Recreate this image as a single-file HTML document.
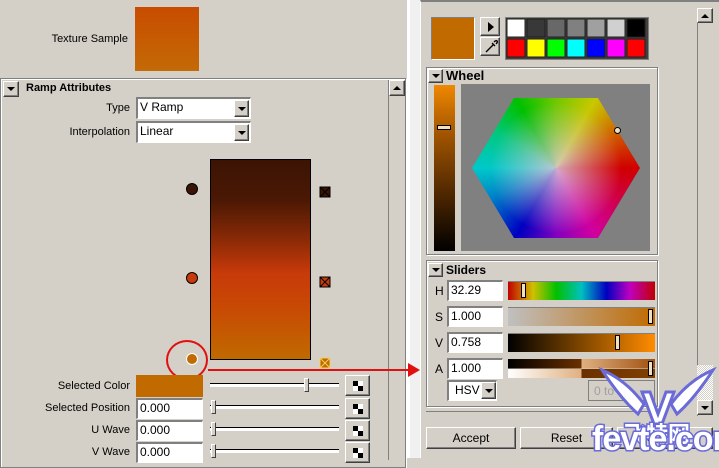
<!DOCTYPE html><html><head><meta charset="utf-8"><style>
*{margin:0;padding:0;box-sizing:border-box}
body{width:719px;height:458px;overflow:hidden;background:#d4d0c8;font-family:"Liberation Sans",Arial,sans-serif;font-size:11px;color:#000;position:relative}
.a{position:absolute}
.lbl{position:absolute;text-align:right;white-space:nowrap}
.in{position:absolute;background:#fff;border-top:2px solid #808080;border-left:2px solid #808080;border-right:1px solid #fff;border-bottom:1px solid #fff;padding-left:2px;line-height:17px;white-space:nowrap;font-size:12px}
.btn{position:absolute;background:#d4d0c8;border-top:1px solid #fff;border-left:1px solid #fff;border-right:1px solid #404040;border-bottom:1px solid #404040;box-shadow:inset -1px -1px 0 #808080}
.arr{position:absolute;width:0;height:0;border-left:4px solid transparent;border-right:4px solid transparent;border-top:4px solid #000}
.frame{position:absolute;border:1px solid #808080;box-shadow:1px 1px 0 #fff inset,1px 1px 0 #fff}
.chk{position:absolute;width:10px;height:10px;background:linear-gradient(90deg,#000 50%,#fff 50%) top/100% 50% no-repeat,linear-gradient(90deg,#fff 50%,#000 50%) bottom/100% 50% no-repeat}
.sl{position:absolute;height:4px;border-top:1px solid #000;border-bottom:1px solid #fff;background:#fff}
.th{position:absolute;width:5px;height:14px;background:#d4d0c8;border:1px solid #404040;border-top-color:#fff;border-left-color:#fff}
.b{font-weight:bold}
</style></head><body>
<div class="lbl" style="left:40px;top:33px;width:88px">Texture Sample</div>
<div class="a" style="left:135px;top:7px;width:64px;height:64px;background:linear-gradient(#c84c00,#c46a06)"></div>
<div class="a" style="left:407px;top:0;width:3px;height:458px;background:#fff"></div>
<div class="a" style="left:410px;top:0;width:10px;height:458px;background:#f0f0f0"></div>
<div class="frame" style="left:0;top:78px;width:406px;height:390px"></div>
<div class="btn" style="left:3px;top:81px;width:16px;height:16px"><div class="arr" style="left:3px;top:5px"></div></div>
<div class="a b" style="left:26px;top:82px">Ramp Attributes</div>
<div class="a" style="left:388px;top:80px;width:17px;height:380px;background:#d4d0c8;border-left:1px solid #808080"></div>
<div class="btn" style="left:389px;top:80px;width:16px;height:16px"><div class="arr" style="left:3px;top:5px;border-top:0;border-bottom:4px solid #000"></div></div>
<div class="lbl" style="left:60px;top:102px;width:70px">Type</div>
<div class="in" style="left:136px;top:97px;width:115px;height:22px">V Ramp</div>
<div class="btn" style="left:234px;top:100px;width:15px;height:17px"><div class="arr" style="left:3px;top:6px"></div></div>
<div class="lbl" style="left:40px;top:126px;width:90px">Interpolation</div>
<div class="in" style="left:136px;top:121px;width:115px;height:22px">Linear</div>
<div class="btn" style="left:234px;top:124px;width:15px;height:17px"><div class="arr" style="left:3px;top:6px"></div></div>
<div class="a" style="left:210px;top:159px;width:101px;height:201px;border:1px solid #000;background:linear-gradient(#3c1404 0%,#4a1804 20%,#8a2a06 40%,#c83a0a 57%,#c84a04 75%,#c06a00 100%)"></div>
<div class="a" style="left:186px;top:183px;width:12px;height:12px;border-radius:50%;background:#3c1404;border:1px solid #000"></div>
<div class="a" style="left:186px;top:272px;width:12px;height:12px;border-radius:50%;background:#c83a0a;border:1px solid #000"></div>
<div class="a" style="left:186px;top:353px;width:12px;height:12px;border-radius:50%;background:#c06a00;border:1px solid #fff"></div>
<div class="a" style="left:166px;top:340px;width:42px;height:40px;border-radius:50%;border:2px solid #e01010"></div>
<svg class="a" style="left:318px;top:186px" width="14" height="186">
<g stroke="#000" fill="#3c1404"><rect x="2" y="1" width="10" height="10"/><rect x="2" y="91" width="10" height="10" fill="#c83a0a"/></g>
<path d="M2 1L12 11M12 1L2 11M2 91L12 101M12 91L2 101" stroke="#000"/>
<rect x="2" y="172" width="10" height="10" fill="#c06a00" stroke="#f0d060"/><path d="M2 172L12 182M12 172L2 182" stroke="#f0d060"/>
</svg>
<div class="a" style="left:208px;top:369px;width:200px;height:2px;background:#e01010"></div>
<div class="a" style="left:408px;top:363px;width:0;height:0;border-top:7px solid transparent;border-bottom:7px solid transparent;border-left:12px solid #e01010"></div>
<div class="lbl" style="left:20px;top:380px;width:110px">Selected Color</div>
<div class="a" style="left:136px;top:375px;width:67px;height:22px;background:#c06a00"></div>
<div class="lbl" style="left:20px;top:402px;width:110px">Selected Position</div>
<div class="in" style="left:136px;top:398px;width:67px;height:21px">0.000</div>
<div class="lbl" style="left:20px;top:424px;width:110px">U Wave</div>
<div class="in" style="left:136px;top:420px;width:67px;height:21px">0.000</div>
<div class="lbl" style="left:20px;top:446px;width:110px">V Wave</div>
<div class="in" style="left:136px;top:442px;width:67px;height:21px">0.000</div>
<div class="sl" style="left:210px;top:383px;width:129px"></div><div class="th" style="left:304px;top:378px"></div>
<div class="sl" style="left:210px;top:405px;width:129px"></div><div class="th" style="left:211px;top:400px"></div>
<div class="sl" style="left:210px;top:427px;width:129px"></div><div class="th" style="left:211px;top:422px"></div>
<div class="sl" style="left:210px;top:449px;width:129px"></div><div class="th" style="left:211px;top:444px"></div>
<div class="btn" style="left:345px;top:375px;width:25px;height:21px"><div class="chk" style="left:7px;top:5px"></div></div>
<div class="btn" style="left:345px;top:398px;width:25px;height:21px"><div class="chk" style="left:7px;top:5px"></div></div>
<div class="btn" style="left:345px;top:420px;width:25px;height:21px"><div class="chk" style="left:7px;top:5px"></div></div>
<div class="btn" style="left:345px;top:442px;width:25px;height:21px"><div class="chk" style="left:7px;top:5px"></div></div>
<div class="a" style="left:420px;top:0;width:299px;height:458px;background:#d4d0c8;border-top:2px solid #808080;border-left:1px solid #fff"></div>
<div class="a" style="left:431px;top:17px;width:44px;height:43px;background:#c06a00;border:1px solid #808080;border-right-color:#fff;border-bottom-color:#fff"></div>
<div class="btn" style="left:480px;top:17px;width:20px;height:19px"><div class="a" style="left:7px;top:4px;border-top:5px solid transparent;border-bottom:5px solid transparent;border-left:6px solid #000"></div></div>
<div class="btn" style="left:480px;top:37px;width:20px;height:19px"><svg class="a" style="left:3px;top:2px" width="14" height="14"><path d="M2 12L9 5M8 3L11 6M10 2Q12 0 13 1Q14 2 12 4" stroke="#000" fill="none" stroke-width="1.4"/></svg></div>
<div class="a" style="left:505px;top:17px;width:144px;height:43px;background:#404040;border:1px solid #808080"></div>
<svg class="a" style="left:506px;top:18px" width="142" height="41">
<g stroke="#202020">
<rect x="1" y="1" width="18" height="18" fill="#fff"/><rect x="21" y="1" width="18" height="18" fill="#383838"/><rect x="41" y="1" width="18" height="18" fill="#686868"/><rect x="61" y="1" width="18" height="18" fill="#808080"/><rect x="81" y="1" width="18" height="18" fill="#a0a0a0"/><rect x="101" y="1" width="18" height="18" fill="#d0d0d0"/><rect x="121" y="1" width="18" height="18" fill="#000"/>
<rect x="1" y="21" width="18" height="18" fill="#f00"/><rect x="21" y="21" width="18" height="18" fill="#ff0"/><rect x="41" y="21" width="18" height="18" fill="#0f0"/><rect x="61" y="21" width="18" height="18" fill="#0ff"/><rect x="81" y="21" width="18" height="18" fill="#00f"/><rect x="101" y="21" width="18" height="18" fill="#f0f"/><rect x="121" y="21" width="18" height="18" fill="#f00"/>
</g></svg>
<div class="frame" style="left:426px;top:67px;width:232px;height:188px"></div>
<div class="btn" style="left:428px;top:69px;width:15px;height:14px"><div class="arr" style="left:3px;top:4px"></div></div>
<div class="a b" style="left:446px;top:68px;font-size:13px">Wheel</div>
<div class="a" style="left:434px;top:85px;width:21px;height:166px;background:linear-gradient(#f08800,#a05400 30%,#502800 65%,#000)"></div>
<div class="a" style="left:437px;top:125px;width:14px;height:5px;border:1px solid #000;background:#f0e0c0"></div>
<div class="a" style="left:461px;top:84px;width:189px;height:167px;background:#808080"></div>
<div class="a" style="left:472px;top:98px;width:168px;height:140px;clip-path:polygon(0 50%,25% 0,75% 0,100% 50%,75% 100%,25% 100%);background:radial-gradient(circle at 50% 50%,rgba(215,200,215,.85),rgba(200,200,200,0) 60%),conic-gradient(from 0deg at 50% 50%,#70c800 0deg,#c8c800 30deg,#d06000 60deg,#d00000 90deg,#d000a0 150deg,#8000c0 180deg,#0000c0 210deg,#0080c8 245deg,#00c8c8 270deg,#00c880 300deg,#00c000 330deg,#70c800 360deg)"></div>
<div class="a" style="left:614px;top:127px;width:7px;height:7px;border-radius:50%;border:1px solid #000;background:#f0e0c0"></div>
<div class="frame" style="left:426px;top:260px;width:232px;height:147px"></div>
<div class="btn" style="left:428px;top:263px;width:15px;height:14px"><div class="arr" style="left:3px;top:4px"></div></div>
<div class="a b" style="left:446px;top:263px;font-size:12px">Sliders</div>
<div class="a" style="left:435px;top:284px;font-size:12px">H</div><div class="in" style="left:447px;top:280px;width:56px;height:21px">32.29</div>
<div class="a" style="left:435px;top:310px;font-size:12px">S</div><div class="in" style="left:447px;top:306px;width:56px;height:21px">1.000</div>
<div class="a" style="left:435px;top:336px;font-size:12px">V</div><div class="in" style="left:447px;top:332px;width:56px;height:21px">0.758</div>
<div class="a" style="left:435px;top:362px;font-size:12px">A</div><div class="in" style="left:447px;top:358px;width:56px;height:21px">1.000</div>
<div class="a" style="left:508px;top:281px;width:147px;height:19px;background:linear-gradient(90deg,#c00000,#d0c000 17%,#00c000 33%,#00c0c0 50%,#0000c0 67%,#c000c0 83%,#c00000);border-top:1px solid #808080"></div>
<div class="a" style="left:508px;top:307px;width:147px;height:19px;background:linear-gradient(90deg,#c0c0c0,#c06a00);border-top:1px solid #808080"></div>
<div class="a" style="left:508px;top:333px;width:147px;height:19px;background:linear-gradient(90deg,#000,#ff8c00);border-top:1px solid #808080"></div>
<div class="a" style="left:508px;top:359px;width:147px;height:19px;background:linear-gradient(90deg,#000,#6a3000 50%,#e0b080 50%,#a05010) top/100% 50% no-repeat,linear-gradient(90deg,#fff,#e0b080 50%,#6a3000 50%,#804000) bottom/100% 50% no-repeat"></div>
<div class="a" style="left:521px;top:283px;width:5px;height:15px;border:1px solid #000;background:#f0e0c0"></div>
<div class="a" style="left:648px;top:309px;width:5px;height:15px;border:1px solid #000;background:#f0e0c0"></div>
<div class="a" style="left:615px;top:335px;width:5px;height:15px;border:1px solid #000;background:#f0e0c0"></div>
<div class="a" style="left:648px;top:361px;width:5px;height:15px;border:1px solid #000;background:#f0e0c0"></div>
<div class="in" style="left:447px;top:380px;width:50px;height:21px;padding-left:6px">HSV</div>
<div class="btn" style="left:481px;top:382px;width:15px;height:17px"><div class="arr" style="left:3px;top:6px"></div></div>
<div class="a" style="left:588px;top:380px;width:67px;height:21px;border:1px solid #808080;color:#a0a0a0;padding:3px 5px;font-size:12px">0 to 1</div>
<div class="a" style="left:426px;top:411px;width:232px;height:10px;border-top:1px solid #808080"></div>
<div class="a" style="left:697px;top:8px;width:16px;height:408px;background:#d4d0c8;border-left:1px solid #808080"></div>
<div class="btn" style="left:697px;top:8px;width:16px;height:15px"><div class="arr" style="left:3px;top:5px;border-top:0;border-bottom:4px solid #000"></div></div>
<div class="a" style="left:697px;top:365px;width:16px;height:35px;background:repeating-conic-gradient(#fff 0 25%,#d4d0c8 0 50%) 0 0/2px 2px"></div>
<div class="btn" style="left:697px;top:400px;width:16px;height:15px"><div class="arr" style="left:3px;top:5px"></div></div>
<div class="btn" style="left:426px;top:427px;width:90px;height:22px;text-align:center;line-height:20px;font-size:12px">Accept</div>
<div class="btn" style="left:520px;top:427px;width:93px;height:22px;text-align:center;line-height:20px;font-size:12px">Reset</div>
<div class="btn" style="left:617px;top:427px;width:96px;height:22px;text-align:center;line-height:20px;font-size:12px">Cancel</div>
<svg class="a" style="left:596px;top:352px" width="123" height="106">
<g fill="#fff" stroke="#6a6ad8" stroke-width="3">
<path d="M6 18Q30 28 48 52L42 62Q24 46 6 18Z"/><path d="M117 18Q93 28 75 52L81 62Q99 46 117 18Z"/>
<path d="M46 40L58 72L66 72L78 40L70 40L62 62L54 40Z"/>
</g>
<text x="61" y="90" text-anchor="middle" font-family="Noto Sans CJK SC,sans-serif" font-weight="bold" font-size="22" fill="#fff" stroke="#6a6ad8" stroke-width="3" paint-order="stroke">飞特网</text>
</svg>
<div class="a" style="left:592px;top:420px;font-size:34px;font-weight:bold;color:#fff;-webkit-text-stroke:3px #6a6ad8;paint-order:stroke fill;letter-spacing:-1px;line-height:38px">fevte.com</div>
</body></html>
